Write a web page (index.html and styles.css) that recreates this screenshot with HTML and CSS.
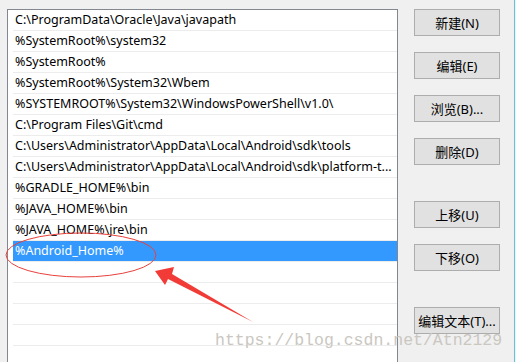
FILE: index.html
```html
<!DOCTYPE html>
<html lang="zh-CN">
<head>
  <meta charset="UTF-8">
  <title>编辑环境变量</title>
  <link rel="stylesheet" href="styles.css">
</head>
<body>
  <div class="fenetre">
    <ul class="liste">
      <li>C:\ProgramData\Oracle\Java\javapath</li>
      <li>%SystemRoot%\system32</li>
      <li>%SystemRoot%</li>
      <li>%SystemRoot%\System32\Wbem</li>
      <li>%SYSTEMROOT%\System32\WindowsPowerShell\v1.0\</li>
      <li>C:\Program Files\Git\cmd</li>
      <li>C:\Users\Administrator\AppData\Local\Android\sdk\tools</li>
      <li>C:\Users\Administrator\AppData\Local\Android\sdk\platform-t...</li>
      <li>%GRADLE_HOME%\bin</li>
      <li>%JAVA_HOME%\bin</li>
      <li>%JAVA_HOME%\jre\bin</li>
      <li class="choisi">%Android_Home%</li>
      <li></li>
      <li></li>
      <li></li>
      <li></li>
      <li></li>
    </ul>

    <div class="boutons">
      <button>新建(N)</button>
      <button>编辑(E)</button>
      <button>浏览(B)...</button>
      <button>删除(D)</button>
      <button class="ecart">上移(U)</button>
      <button>下移(O)</button>
      <button class="ecart">编辑文本(T)...</button>
    </div>
  </div>

  <!-- annotations de la capture -->
  <svg class="annotations" width="516" height="362" viewBox="0 0 516 362">
    <ellipse cx="81" cy="255" rx="75" ry="22" fill="none" stroke="#e8413c" stroke-width="1"/>
    <polygon points="155,271 174,267 172,274 253,322 168,279 165,285" fill="#f23b36"/>
  </svg>
  <div class="filigrane">https://blog.csdn.net/Atn2129</div>
</body>
</html>
```

FILE: styles.css
```css
body {
  margin: 0;
  width: 516px;
  height: 362px;
  overflow: hidden;
  background-color: #f0f0f0;
  font-family: "Noto Sans", "Noto Sans CJK SC", sans-serif;
  font-size: 12.5px;
  position: relative;
}
.fenetre {
  display: flex;
  align-items: flex-start;
  height: 362px;
  overflow: hidden;
  box-sizing: border-box;
  border-right: 1px solid #5fc3dc;
  width: 515px;
}
.liste {
  list-style: none;
  margin: 9px 0 0 7px;
  padding: 0;
  width: 389px;
  height: 400px;
  flex-shrink: 0;
  background-color: #fff;
  border: 1px solid #828790;
}
.liste li {
  height: 20px;
  line-height: 20px;
  margin-left: 5px;
  padding-left: 2px;
  border-bottom: 1px solid #ececec;
  color: #000;
  white-space: nowrap;
  overflow: hidden;
}
.liste li.choisi {
  background-color: #3399ff;
  color: #fff;
}
.boutons {
  display: flex;
  flex-direction: column;
  gap: 16px;
  margin: 9px 0 0 16px;
  width: 86px;
}
button {
  height: 27px;
  padding: 0;
  background-color: #e1e1e1;
  border: 1px solid #adadad;
  font-family: "Noto Sans", "Noto Sans CJK SC", sans-serif;
  font-size: 13px;
  color: #000;
}
button.ecart {
  margin-top: 20px;
}
.annotations {
  position: absolute;
  left: 0;
  top: 0;
  pointer-events: none;
}
.filigrane {
  position: absolute;
  left: 215px;
  top: 331px;
  font-family: "Liberation Mono", monospace;
  font-size: 16.5px;
  color: #cac7c1;
  pointer-events: none;
}
```
